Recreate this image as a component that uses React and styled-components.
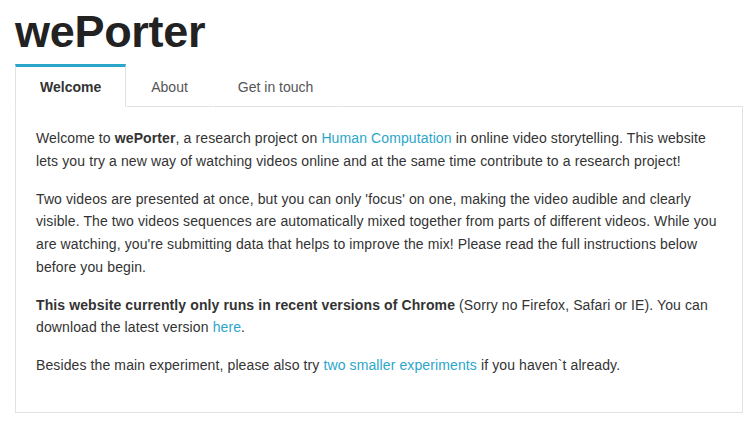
import React, { useState } from "react";
import styled, { createGlobalStyle } from "styled-components";

const GlobalStyle = createGlobalStyle`
  body {
    margin: 0;
    background: #fff;
    font-family: "Liberation Sans", Arial, Helvetica, sans-serif;
    color: #333;
  }
`;

const Page = styled.div`
  width: 728px;
  padding: 8px 0 0 15px;
`;

const Title = styled.h1`
  margin: 0;
  font-size: 45px;
  line-height: 48px;
  font-weight: 700;
  color: #222;
  letter-spacing: -0.3px;
`;

const Tabs = styled.ul`
  display: flex;
  list-style: none;
  margin: 8px 0 0 0;
  padding: 0;
  border-bottom: 1px solid #e2e2e2;
`;

const Tab = styled.li`
  padding: 0 24px;
  height: 39px;
  display: flex;
  align-items: center;
  font-size: 14px;
  margin-bottom: -1px;
  cursor: pointer;
  color: ${(p) => (p.$active ? "#333" : "#555")};
  font-weight: ${(p) => (p.$active ? 700 : 400)};
  border-top: 3px solid ${(p) => (p.$active ? "#2ba6cb" : "transparent")};
  border-left: 1px solid ${(p) => (p.$active ? "#e2e2e2" : "transparent")};
  border-right: 1px solid ${(p) => (p.$active ? "#e2e2e2" : "transparent")};
  border-bottom: 1px solid ${(p) => (p.$active ? "#fff" : "#e2e2e2")};
  background: #fff;
`;

const Panel = styled.div`
  border: 1px solid #e2e2e2;
  border-top: none;
  padding: 20px;
`;

const Para = styled.p`
  margin: 0 0 15px 0;
  font-size: 14px;
  line-height: 22.75px;
  letter-spacing: 0.11px;
  color: #333;
`;

const Link = styled.a`
  color: #2ba6cb;
  text-decoration: none;
`;

const tabs = ["Welcome", "About", "Get in touch"];

export default function App() {
  const [active, setActive] = useState(0);
  return (
    <Page>
      <GlobalStyle />
      <Title>wePorter</Title>
      <Tabs>
        {tabs.map((t, i) => (
          <Tab key={t} $active={i === active} onClick={() => setActive(i)}>
            {t}
          </Tab>
        ))}
      </Tabs>
      <Panel>
        <Para>
          Welcome to <b>wePorter</b>, a research project on{" "}
          <Link href="#">Human Computation</Link> in online video storytelling.
          This website lets you try a new way of watching videos online and at
          the same time contribute to a research project!
        </Para>
        <Para>
          Two videos are presented at once, but you can only 'focus' on one,
          making the video audible and clearly visible. The two videos sequences
          are automatically mixed together from parts of different videos. While
          you are watching, you're submitting data that helps to improve the
          mix! Please read the full instructions below before you begin.
        </Para>
        <Para>
          <b>This website currently only runs in recent versions of Chrome</b>{" "}
          (Sorry no Firefox, Safari or IE). You can download the latest version{" "}
          <Link href="#">here</Link>.
        </Para>
        <Para>
          Besides the main experiment, please also try{" "}
          <Link href="#">two smaller experiments</Link> if you haven`t already.
        </Para>
      </Panel>
    </Page>
  );
}
